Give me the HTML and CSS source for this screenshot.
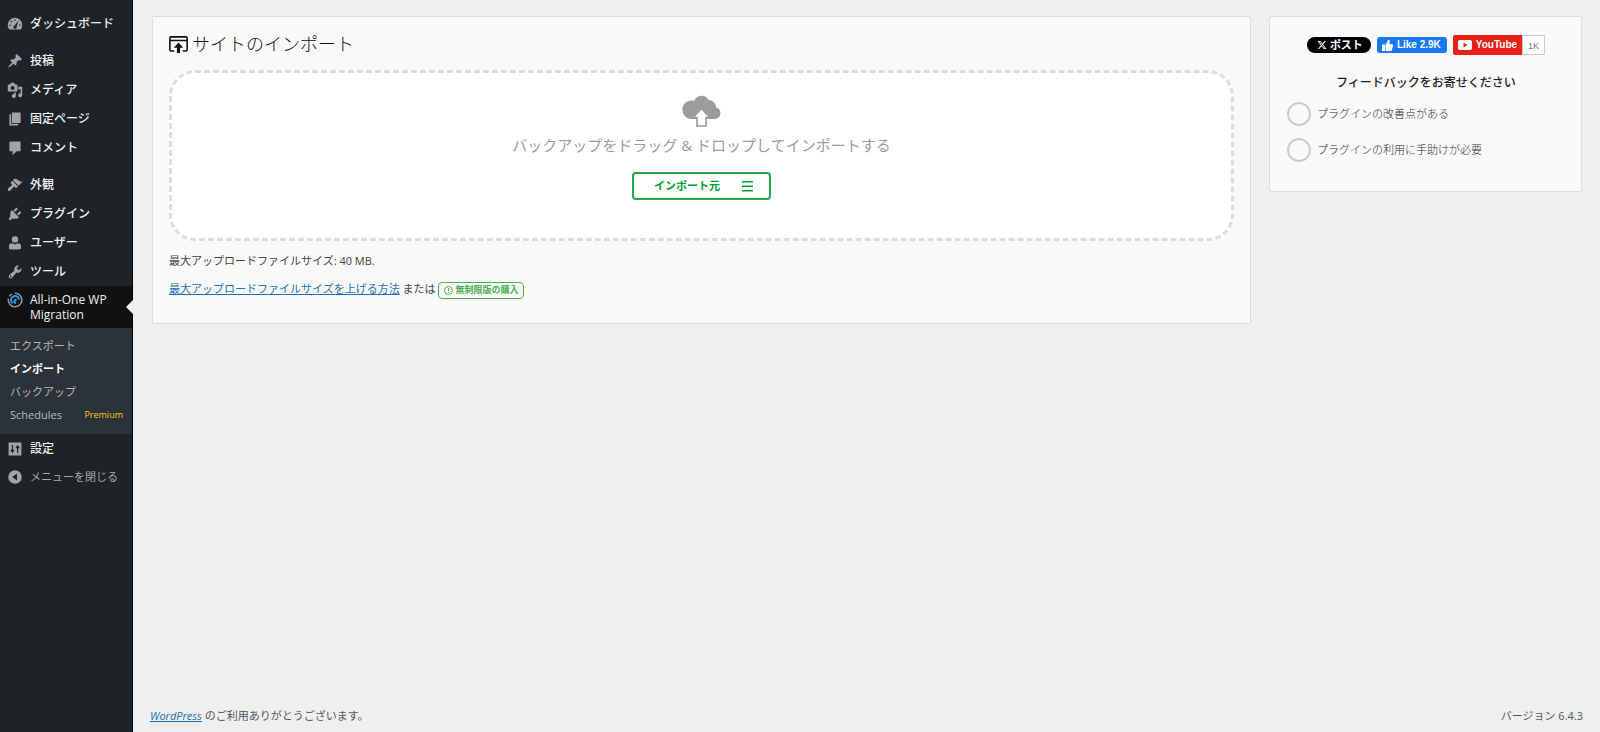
FILE: index.html
```html
<!DOCTYPE html>
<html lang="ja">
<head>
    <meta charset="UTF-8">
    <meta name="viewport" content="width=device-width, initial-scale=1.0">
    <title>サイトのインポート</title>
    <link rel="stylesheet" href="styles.css">
</head>
<body>
    <nav class="admin-menu">
        <ul class="menu-group">
            <li><a href="#"><svg class="menu-icon" viewBox="0 0 20 20"><path fill-rule="evenodd" d="M3 17a9 9 0 1 1 14 0zM10 4a1 1 0 1 0 0 2 1 1 0 0 0 0-2zM5.500 6a1 1 0 1 0 0 2 1 1 0 0 0 0-2zM3.800 10.500a1 1 0 1 0 0 2 1 1 0 0 0 0-2zM16.200 10.500a1 1 0 1 0 0 2 1 1 0 0 0 0-2zM14.500 6l-5 6a2 2 0 1 0 2.500 1.500z"/></svg>ダッシュボード</a></li>
        </ul>
        <ul class="menu-group">
            <li><a href="#"><svg class="menu-icon" viewBox="0 0 20 20"><path d="M10.440 3.020l1.820-1.820 6.360 6.350-1.830 1.820c-1.050-.680-2.480-.570-3.410.360l-.750.750c-.920.930-1.040 2.350-.350 3.410l-1.830 1.820-2.410-2.410-2.800 2.790c-.420.420-3.380 2.710-3.800 2.290s1.860-3.390 2.280-3.810l2.790-2.790L4.100 9.360l1.830-1.820c1.050.690 2.480.570 3.400-.360l.750-.750c.930-.920 1.050-2.350.360-3.410z"/></svg>投稿</a></li>
            <li><a href="#"><svg class="menu-icon" viewBox="0 0 20 20"><path fill-rule="evenodd" d="M13 11V4c0-.550-.450-1-1-1h-1.670L9 1H5L3.670 3H2c-.550 0-1 .450-1 1v7c0 .550.450 1 1 1h10c.550 0 1-.450 1-1zM7 5a2.500 2.500 0 1 1 0 5 2.500 2.500 0 0 1 0-5zM14 6h5v10.500a2.500 2.500 0 1 1-2-2.450V9h-3zM9 13h2v4.500A2.500 2.500 0 1 1 9 15.050z"/></svg>メディア</a></li>
            <li><a href="#"><svg class="menu-icon" viewBox="0 0 20 20"><path d="M6 15V2h11v13zM5 16h9v2H3V4h2z"/></svg>固定ページ</a></li>
            <li><a href="#"><svg class="menu-icon" viewBox="0 0 20 20"><path d="M4 2h12a1 1 0 0 1 1 1v10a1 1 0 0 1-1 1h-4l-5 5v-5H4a1 1 0 0 1-1-1V3a1 1 0 0 1 1-1z"/></svg>コメント</a></li>
        </ul>
        <ul class="menu-group">
            <li><a href="#"><svg class="menu-icon" viewBox="0 0 20 20"><path d="M14.480 11.060L7.410 3.990l1.500-1.500c.500-.560 2.300-.470 3.510.320 1.210.800 1.430 1.280 2.910 2.100 1.180.640 2.450 1.260 4.450.850zm-.710.710L6.700 4.700 4.930 6.470c-.390.390-.390 1.020 0 1.410l1.060 1.060c.390.390.390 1.030 0 1.420-.600.600-1.430 1.110-2.210 1.690-.350.260-.700.530-1.010.840C1.430 14.230.400 16.080 1.400 17.070c.990 1 2.840-.030 4.180-1.360.310-.310.580-.660.850-1.020.570-.780 1.080-1.610 1.690-2.210.390-.390 1.020-.390 1.410 0l1.060 1.060c.390.390 1.020.390 1.410 0z"/></svg>外観</a></li>
            <li><a href="#"><svg class="menu-icon" viewBox="0 0 20 20"><path d="M13.110 4.360L9.870 7.600 8 5.730l3.240-3.240c.350-.340 1.050-.200 1.560.320.520.510.660 1.210.310 1.550zm-8 1.770l.910-1.120 9.010 9.010-1.190.840c-.710.710-2.630 1.160-3.820 1.160H6.140L4.900 17.260c-.590.590-1.540.590-2.120 0-.590-.580-.590-1.530 0-2.120l1.240-1.240v-3.880c0-1.130.400-3.190 1.090-3.890zm7.260 3.970l3.240-3.240c.340-.350 1.040-.210 1.550.310.520.510.660 1.210.310 1.550l-3.240 3.250z"/></svg>プラグイン</a></li>
            <li><a href="#"><svg class="menu-icon" viewBox="0 0 20 20"><circle cx="10" cy="5.500" r="4"/><path d="M2.500 17.500v-4q0-3 4-3.300L10 12l3.500-1.800q4 .3 4 3.300v4q-7.500 1.500-15 0z"/></svg>ユーザー</a></li>
            <li><a href="#"><svg class="menu-icon" viewBox="0 0 20 20"><path d="M16.680 9.770c-1.340 1.340-3.300 1.670-4.950.990l-5.410 6.520c-.990.990-2.590.990-3.580 0s-.990-2.590 0-3.570l6.520-5.420c-.680-1.650-.350-3.610.990-4.950 1.280-1.280 3.120-1.620 4.720-1.060l-2.890 2.890 2.820 2.820 2.860-2.870c.530 1.580.180 3.390-1.080 4.650zM3.810 16.210c.400.390 1.040.390 1.430 0 .400-.400.400-1.040 0-1.430-.390-.400-1.030-.400-1.430 0-.390.390-.390 1.030 0 1.430z"/></svg>ツール</a></li>
            <li class="current">
                <a href="#"><svg class="menu-icon outline" viewBox="0 0 20 20"><path stroke="#8c9196" d="M10 1.500a8.500 8.500 0 1 1-8.300 7M3 5.500a8 8 0 0 1 3-2.800"/><path stroke="#1e9be0" stroke-width="2.500" d="M7 14a5 5 0 1 1 8-4.500M11.500 14q-3.500-1-2-3.500 1-1 2.500-.5"/></svg><span>All-in-One WP Migration</span></a>
                <ul class="submenu">
                    <li><a href="#">エクスポート</a></li>
                    <li><a href="#" class="selected">インポート</a></li>
                    <li><a href="#">バックアップ</a></li>
                    <li><a href="#">Schedules <span class="premium">Premium</span></a></li>
                </ul>
            </li>
            <li><a href="#"><svg class="menu-icon" viewBox="0 0 20 20"><path fill-rule="evenodd" d="M2 2h16v16H2zM6 5v6H4.500v2H6v2h1.500v-2H9v-2H7.500V5zM12.500 5v2H11v2h1.500v6H14V9h1.500V7H14V5z"/></svg>設定</a></li>
            <li><a href="#" class="collapse"><svg class="menu-icon" viewBox="0 0 20 20"><path fill-rule="evenodd" d="M10 1.500a8.500 8.500 0 1 1 0 17 8.500 8.500 0 0 1 0-17zM12.500 5.500L6.500 10l6 4.500z"/></svg>メニューを閉じる</a></li>
        </ul>
    </nav>

    <div class="content">
        <div class="columns">
            <main class="card import-card">
                <h1><svg class="title-icon" viewBox="0 0 18 16"><path fill="none" stroke="#111" stroke-width="1.500" d="M5 14.200H2.200Q.8 14.200.8 13V2Q.8.8 2 .8h14Q17.200.8 17.200 2v11q0 1.200-1.400 1.200H13M1 4.200h16"/><path fill="#111" d="M9 6l4.500 5h-3v5h-3v-5h-3z"/></svg>サイトのインポート</h1>

                <div class="drop-zone">
                    <svg class="cloud" viewBox="0 0 39 32"><path fill="#9c9c9c" d="M9 24A9.300 9.300 0 1 1 12.300 5.800a7.800 7.800 0 0 1 14.300-.8 7.300 7.300 0 0 1 7.400 7.400A5.900 5.900 0 0 1 33 24z"/><path fill="#fff" stroke="#9c9c9c" stroke-width="1.700" d="M19.500 13.500l8.300 9H24v8.500h-9v-8.500h-3.800z"/></svg>
                    <p>バックアップをドラッグ &amp; ドロップしてインポートする</p>
                    <button type="button" class="import-button">インポート元
                        <svg width="11" height="11" viewBox="0 0 11 11"><path d="M0 0h11v1.500H0zM0 4.500h11V6H0zM0 9h11v1.500H0z"/></svg>
                    </button>
                </div>

                <p class="note">最大アップロードファイルサイズ: <strong>40 MB.</strong></p>
                <p class="note"><a href="#">最大アップロードファイルサイズを上げる方法</a> または <a href="#" class="buy"><svg width="9" height="9" viewBox="0 0 9 9"><circle cx="4.500" cy="4.500" r="4" fill="none" stroke="#4caf50"/><path fill="#4caf50" d="M4 2h1v3H4zM4 6h1v1H4z"/></svg>無制限版の購入</a></p>
            </main>

            <aside class="card feedback-card">
                <div class="social">
                    <a href="#" class="post"><svg width="10" height="10" viewBox="0 0 24 24"><path fill="#fff" d="M18.244 2.250h3.308l-7.227 8.260 8.502 11.240H16.170l-5.214-6.817L4.990 21.750H1.680l7.730-8.835L1.254 2.250H8.080l4.713 6.231zm-1.161 17.520h1.833L7.084 4.126H5.117z"/></svg>ポスト</a>
                    <a href="#" class="like"><svg width="11" height="11" viewBox="0 0 11 11"><path fill="#fff" d="M0 4.500h3V11H0zM3.500 5L6 0h1q1 .3.800 1.500L7.300 4H10q1.200.3 1 1.500L10 9.800Q9.700 11 8.500 11h-5z"/></svg>Like 2.9K</a>
                    <span class="youtube"><a href="#"><svg width="14" height="10" viewBox="0 0 14 10"><rect width="14" height="10" rx="2" fill="#fff"/><path fill="#e62117" d="M5.500 2.500L9.500 5l-4 2.500z"/></svg>YouTube</a><span class="count">1K</span></span>
                </div>
                <form>
                    <h2>フィードバックをお寄せください</h2>
                    <label><input type="radio" name="feedback" value="suggestions">プラグインの改善点がある</label>
                    <label><input type="radio" name="feedback" value="help">プラグインの利用に手助けが必要</label>
                </form>
            </aside>
        </div>

        <footer class="footer">
            <p><a href="#">WordPress</a> のご利用ありがとうございます。</p>
            <p>バージョン 6.4.3</p>
        </footer>
    </div>
</body>
</html>
```
FILE: styles.css
```css
* {
    box-sizing: border-box;
}
body {
    display: flex;
    min-height: 100vh;
    margin: 0;
    background: #efefef;
    color: #444;
    font-family: "Open Sans", "Noto Sans CJK JP", sans-serif;
    font-size: 11px;
    line-height: 20px;
}
ul, p, h1, h2 {
    margin: 0;
    padding: 0;
}
ul {
    list-style: none;
}
a {
    color: #2271b1;
}
svg {
    flex: none;
}

/* Sidebar */
.admin-menu {
    flex: none;
    width: 133px;
    padding-top: 9px;
    background: #1d2327;
    border-right: 1px solid #000;
}
.menu-group {
    margin-bottom: 8px;
}
.menu-group a {
    display: flex;
    align-items: center;
    min-height: 29px;
    padding-left: 7px;
    gap: 7px;
    color: #f0f0f1;
    font-size: 12px;
    font-weight: 500;
    text-decoration: none;
}
.menu-group a.collapse {
    min-height: 28px;
    color: #a7aaad;
    font-size: 11px;
    font-weight: 400;
}
.menu-icon {
    width: 16px;
    height: 16px;
    fill: #a0a5aa;
}
.menu-icon.outline {
    fill: none;
    stroke-width: 2px;
}
.current > a {
    position: relative;
    align-items: flex-start;
    padding-top: 6px;
    padding-bottom: 6px;
    background: #111;
    line-height: 15px;
}
.current > a::after {
    content: "";
    position: absolute;
    right: -1px;
    top: 14px;
    border: 7px solid transparent;
    border-left-width: 0;
    border-right-color: #efefef;
}
.submenu {
    padding: 6px 0 8px;
    background: #2c3338;
}
.submenu a {
    justify-content: space-between;
    min-height: 0;
    padding: 2px 9px 1px 10px;
    color: #b4b9be;
    font-size: 11px;
    font-weight: 400;
}
.submenu a.selected {
    color: #fff;
    font-weight: 700;
}
.submenu .premium {
    color: #ffc515;
    font-size: 9px;
}

/* Page */
.content {
    display: flex;
    flex: 1;
    flex-direction: column;
    justify-content: space-between;
    padding: 16px 17px 6px;
}
.columns {
    display: flex;
    align-items: flex-start;
    gap: 18px;
    padding: 0 1px 0 2px;
}
.card {
    background: #f9f9f9;
    border: 1px solid #ddd;
    border-radius: 2px;
}
.import-card {
    flex: 1;
    padding: 12px 16px 24px;
}
.import-card h1 {
    display: flex;
    align-items: center;
    gap: 4px;
    margin-bottom: 11px;
    color: #111;
    font-size: 18px;
    font-weight: 300;
    line-height: 30px;
}
.title-icon {
    width: 19px;
    height: 17px;
}
.drop-zone {
    display: flex;
    flex-direction: column;
    align-items: center;
    margin-bottom: 10px;
    padding: 22px 0 38px;
    background: #fff;
    border: 3px dashed #ddd;
    border-radius: 26px;
}
.cloud {
    width: 39px;
    height: 32px;
}
.drop-zone p {
    margin: 5px 0 14px;
    color: #9c9c9c;
    font-size: 15px;
    line-height: 26px;
}
.import-button {
    display: flex;
    align-items: center;
    gap: 22px;
    height: 28px;
    padding: 0 16px 0 20px;
    background: #fff;
    border: 2px solid #27a549;
    border-radius: 4px;
    color: #00a032;
    font: inherit;
    font-weight: 700;
}
.import-button svg {
    fill: #00a032;
}
.note {
    margin-bottom: 8px;
}
.note:last-child {
    margin-bottom: 0;
}
.note strong {
    font-weight: 500;
}
.buy {
    display: inline-flex;
    align-items: center;
    gap: 2px;
    height: 17px;
    padding: 0 5px;
    border: 1px solid #4caf50;
    border-radius: 4px;
    color: #4caf50;
    font-size: 9px;
    font-weight: 700;
    text-decoration: none;
    vertical-align: middle;
}

/* Feedback */
.feedback-card {
    flex: none;
    width: 313px;
    padding: 18px 16px 29px 17px;
}
.social {
    display: flex;
    align-items: center;
    justify-content: center;
    gap: 6px;
    font-family: "Liberation Sans", "Noto Sans CJK JP", sans-serif;
    font-weight: 700;
}
.social a {
    display: flex;
    align-items: center;
    color: #fff;
    text-decoration: none;
}
.social .post {
    gap: 3px;
    height: 16px;
    padding: 0 8px 0 10px;
    background: #000;
    border-radius: 8px;
}
.social .like {
    gap: 4px;
    height: 16px;
    padding: 0 6px 0 5px;
    background: #1877f2;
    border-radius: 3px;
    font-size: 10px;
}
.youtube {
    display: flex;
    height: 20px;
}
.youtube a {
    gap: 4px;
    padding: 0 5px;
    background: #e62117;
    border-radius: 2px 0 0 2px;
    font-size: 10px;
}
.youtube .count {
    padding: 0 5px;
    background: #fff;
    border: 1px solid #ccc;
    color: #777;
    font-size: 9px;
    font-weight: 400;
}
.feedback-card h2 {
    margin: 18px 0 9px;
    color: #222;
    font-size: 12px;
    font-weight: 500;
    text-align: center;
}
.feedback-card label {
    display: flex;
    align-items: center;
    gap: 6px;
    margin-bottom: 12px;
    color: #333;
    font-weight: 300;
}
.feedback-card label:last-child {
    margin-bottom: 0;
}
.feedback-card input {
    flex: none;
    width: 24px;
    height: 24px;
    margin: 0;
    appearance: none;
    background: #f9f9f9;
    border: 2px solid #ccc;
    border-radius: 50%;
}

/* Footer */
.footer {
    display: flex;
    justify-content: space-between;
    color: #50575e;
}
.footer a {
    font-style: italic;
}
```
